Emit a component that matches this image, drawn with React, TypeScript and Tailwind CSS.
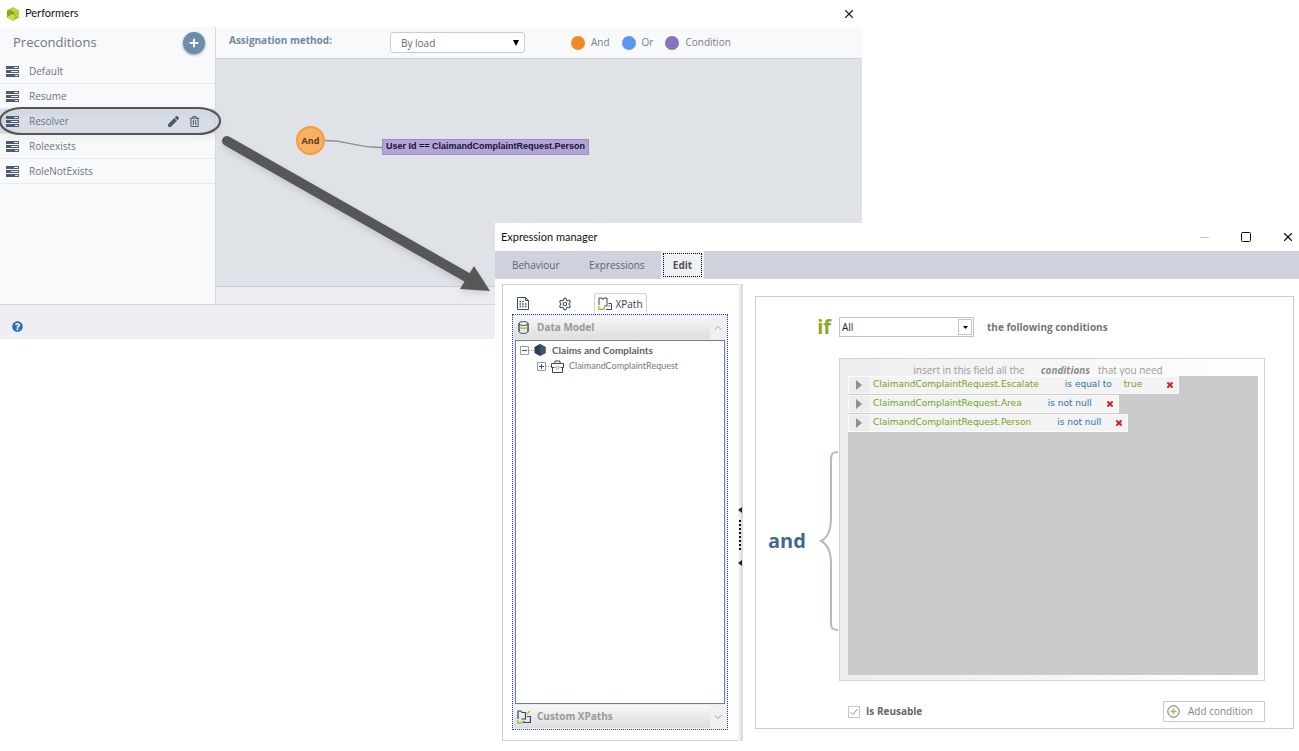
import React, { useState } from 'react';
import { X, Minus, Square, Plus, Settings, ChevronUp, ChevronDown } from 'lucide-react';
import { FaPen, FaRegTrashAlt, FaQuestionCircle } from 'react-icons/fa';

const preconditions = ['Default', 'Resume', 'Resolver', 'Roleexists', 'RoleNotExists'];

const conditions = [
  { path: 'ClaimandComplaintRequest.Escalate', operator: 'is equal to', value: 'true' },
  { path: 'ClaimandComplaintRequest.Area', operator: 'is not null' },
  { path: 'ClaimandComplaintRequest.Person', operator: 'is not null' },
];

function LogoIcon() {
  return (
    <svg className="w-[14px] h-[14px]" viewBox="0 0 14 14">
      <path d="M7 .3 13 3.5v7L7 13.7 1 10.5v-7z" fill="#9dbd2c" />
      <path d="M7 .3 13 3.5 8.500 6 4.500 3.500z" fill="#bfd63f" />
      <path d="M1 3.5 4.500 3.500 6 7 1 10.5z" fill="#87a823" />
      <path d="M8.500 6 13 3.5v7L9.500 9z" fill="#b4cf38" />
      <path d="M6 7 9.500 9 7 13.7 1 10.500z" fill="#c5dc45" />
      <path d="M4.500 3.500 8.500 6 6 7z" fill="#6f8f18" />
    </svg>
  );
}

function RowsIcon() {
  return (
    <svg className="w-[13px] h-[11px]" viewBox="0 0 13 11">
      <path d="M0 0h13v3H0zM0 4h13v3H0zM0 8h13v3H0z" fill="#4d5c74" />
      <path d="M8 1h4v1H8zM5 5h7v1H5zM9 9h3v1H9z" fill="#e8ecf2" />
    </svg>
  );
}

function SheetIcon() {
  return (
    <svg className="w-3 h-[13px]" viewBox="0 0 12 13" fill="none" stroke="#3f4f60">
      <path d="M.5 .5h8l3 3v9H.5z" />
      <path d="M8.5 .5v3h3" />
      <path d="M2.5 4.5h1.5M5.2 4.5h1.5M2.5 7h1.5M5.2 7h1.5M8 7h1.5M2.5 9.5h1.5M5.2 9.5h1.5M8 9.5h1.5" strokeWidth="1.5" />
    </svg>
  );
}

function XPathIcon() {
  return (
    <svg className="w-[14px] h-[14px] shrink-0" viewBox="0 0 14 14" fill="none" stroke="#34495e">
      <path d="M1 8V1h3l1 1.5 1-1.5h3v8H6" />
      <path d="M10.5 6.500h3v6M10.500 9h1.500M8 12.500h5.500" />
      <path d="M1 9v3.300h5V10" stroke="#a4c639" strokeWidth="1.5" />
    </svg>
  );
}

function CustomXPathIcon() {
  return (
    <svg className="w-[14px] h-[14px] shrink-0" viewBox="0 0 14 14" fill="none" stroke="#34495e">
      <path d="M1 9V1h3l1 1.5h3.500V9H4.5" strokeWidth="1.2" />
      <path d="M10 6.5h3.5v6H7V11" strokeWidth="1.2" />
      <path d="M.8 10v3h4v-2M10 4l3-3" stroke="#a4c639" strokeWidth="1.5" />
    </svg>
  );
}

function DatabaseIcon() {
  return (
    <svg className="w-[11px] h-[13px]" viewBox="0 0 11 13" fill="none" stroke="#3f4f60">
      <path d="M1 2.5v8c0 1 2 2 4.5 2s4.5-1 4.5-2v-8" />
      <path d="M1 2.5v8M10 2.5v8" />
      <ellipse cx="5.5" cy="2.5" rx="4.5" ry="2" />
      <path d="M1.5 6.5c1.500 1 6.500 1 8 0" stroke="#a4c639" strokeWidth="1.5" />
    </svg>
  );
}

function BriefcaseIcon() {
  return (
    <svg className="w-[13px] h-[13px]" viewBox="0 0 13 13" fill="none" stroke="#34495e">
      <path d="M4 3V1h5v2M.5 3.5h12v4H.5zM1.5 7.5v5h10v-5" />
      <path d="M3 7.5h7" stroke="#a4c639" />
      <circle cx="6.5" cy="7.8" r="1.5" fill="#fff" stroke="#a4c639" />
    </svg>
  );
}

function TreeToggle({ open }: { open: boolean }) {
  return (
    <svg className="w-[9px] h-[9px]" viewBox="0 0 9 9" fill="#fff" stroke="#9a9a9a">
      <path d="M.5 .5h8v8h-8z" />
      <path d={open ? 'M2 4.5h5' : 'M2 4.5h5M4.5 2v5'} stroke="#3c4f86" />
    </svg>
  );
}

function LegendItem({ color, label }: { color: string; label: string }) {
  return (
    <div className="flex items-center gap-[6px]">
      <span className={`w-[14px] h-[14px] rounded-full ${color}`} />
      <span>{label}</span>
    </div>
  );
}

function PerformersWindow() {
  const [selected, setSelected] = useState('Resolver');

  return (
    <section className="absolute top-0 left-0 right-[437px] flex flex-col bg-white">
      <header className="h-[27px] flex items-center pl-[6px] pr-[6px]">
        <LogoIcon />
        <h1 className="ml-[5px] font-['Lato'] text-[11px] text-[#111]">Performers</h1>
        <button aria-label="Close" className="ml-auto">
          <X className="w-[14px] h-[14px] text-[#222]" strokeWidth={2} />
        </button>
      </header>

      <div className="flex h-[277px]">
        <aside className="w-[216px] shrink-0 bg-[#f8f9fb] border-r border-[#d6d9df]">
          <div className="h-8 flex items-center justify-between pl-[13px] pr-[10px]">
            <h2 className="text-[13px] text-[#6a7688]">Preconditions</h2>
            <button aria-label="Add precondition" className="w-[22px] h-[22px] rounded-full bg-[#6e8cab] shadow-sm shadow-gray-400 flex items-center justify-center">
              <Plus className="w-3 h-3 text-white" strokeWidth={4} />
            </button>
          </div>
          <ul>
            {preconditions.map(name => (
              <li
                key={name}
                className={`h-[25px] flex items-center pl-[6px] pr-[15px] border-b border-[#e9ebef] ${name === selected ? 'bg-[#d9dee6]' : ''}`}
              >
                <button onClick={() => setSelected(name)} className="flex items-center gap-[10px] text-[10px] text-[#6a7484]">
                  <RowsIcon />
                  <span>{name}</span>
                </button>
                {name === selected && (
                  <div className="ml-auto flex items-center gap-[10px] text-[#4d5a6e]">
                    <button aria-label="Edit"><FaPen className="w-[11px] h-[11px]" /></button>
                    <button aria-label="Delete"><FaRegTrashAlt className="w-[11px] h-[11px]" /></button>
                  </div>
                )}
              </li>
            ))}
          </ul>
        </aside>

        <div className="flex-1 flex flex-col min-w-0">
          <div className="h-8 flex items-center pl-[13px] bg-[#f8f9fb] border-b border-[#cfd3d8] text-[10px] text-[#77818f]">
            <label htmlFor="method" className="w-[161px] font-bold text-[#70899d] pb-1">Assignation method:</label>
            <div className="grid w-[135px] items-center">
              <select id="method" className="col-start-1 row-start-1 appearance-none w-full h-[21px] pl-[10px] pt-[2px] bg-white border border-[#c9ccd0] rounded-[3px] text-[10px] text-[#5f6870]">
                <option>By load</option>
              </select>
              <svg className="col-start-1 row-start-1 justify-self-end mr-[6px] w-[6px] h-[6px] pointer-events-none" viewBox="0 0 6 6">
                <path d="M0 0h6L3 6z" fill="#000" />
              </svg>
            </div>
            <div className="ml-[46px] flex gap-3">
              <LegendItem color="bg-[#f08b24]" label="And" />
              <LegendItem color="bg-[#5899ee]" label="Or" />
              <LegendItem color="bg-[#8772bb]" label="Condition" />
            </div>
          </div>

          {/* Diagram canvas */}
          <div className="relative flex-1 bg-[#dfe3e8]">
            <svg className="absolute left-[108px] top-[80px] w-[60px] h-[12px]" viewBox="0 0 60 12" fill="none">
              <path d="M0 1.5c28 0 28 7 58 7" stroke="#8b9096" strokeWidth="1.3" />
            </svg>
            <div className="absolute left-[80px] top-[67px] w-[29px] h-[29px] rounded-full bg-[#f8b066] border-2 border-[#f49d3f] flex items-center justify-center text-[9px] font-bold text-[#5a3a14]">
              And
            </div>
            <div className="absolute left-[166px] top-[80px] h-4 px-[3px] flex items-center bg-[#b3a4d8] border border-[#9c8bc9] font-['Liberation_Sans'] text-[9px] font-bold text-[#16122c] whitespace-nowrap">
              User Id == ClaimandComplaintRequest.Person
            </div>
          </div>
          <div className="h-[18px] bg-[#ebedf1] border-t border-[#c9cddb]" />
        </div>
      </div>

      <footer className="h-[35px] flex items-center pt-2 pl-3 bg-[#eeeff3] border-t border-[#d3d6db]">
        <button aria-label="Help"><FaQuestionCircle className="w-[11px] h-[11px] text-[#2f6fae]" /></button>
      </footer>
    </section>
  );
}

function Annotation() {
  return (
    <svg className="absolute top-0 left-0 w-[500px] h-[310px] pointer-events-none drop-shadow-md" viewBox="0 0 500 310">
      <rect x="0" y="108" width="220" height="26" rx="22" ry="13" fill="none" stroke="#555" strokeWidth="2.2" />
      <path d="M227 141 470 279" stroke="#575757" strokeWidth="10" strokeLinecap="round" />
      <path d="M474 266 490 291 460 289z" fill="#575757" />
    </svg>
  );
}

function DataPanel() {
  return (
    <div className="w-[241px] shrink-0 flex">
      <div className="flex-1 flex flex-col border border-r-0 border-[#cfcfcf] pt-2 pl-[9px] pr-[10px] pb-[10px]">
        <div className="flex h-[21px] items-center pl-[5px]">
          <button aria-label="Forms" className="w-[41px] flex"><SheetIcon /></button>
          <button aria-label="Settings" className="w-[36px] flex">
            <Settings className="w-[14px] h-[14px] text-[#4a5866]" strokeWidth={2} />
          </button>
          <button className="h-[21px] w-[53px] flex items-center justify-center gap-[3px] border border-b-0 border-[#d3d3d3] rounded-t-[3px] text-[10px] text-[#3a3a3a]">
            <XPathIcon />
            XPath
          </button>
        </div>
        <div className="flex-1 flex flex-col border border-dotted border-[#2e3f9c] p-px bg-[#e9edf5]">
          <button className="h-[23px] flex items-center bg-gradient-to-b from-[#f7f7f7] to-[#dedede] text-[10px] font-bold text-[#999]">
            <span className="w-[23px] pl-1"><DatabaseIcon /></span>
            Data Model
            <span className="ml-auto h-full w-4 flex items-center justify-center bg-[#f0f0f0]">
              <ChevronUp className="w-3 h-3 text-[#aaa]" />
            </span>
          </button>
          <div className="flex-1 m-px border border-[#747b8c] bg-white pl-1 pt-[1px]">
            <div className="h-4 flex items-center font-['Lato'] text-[10px] font-bold text-[#5f5f5f]">
              <TreeToggle open />
              <span className="w-[5px] border-t border-dotted border-gray-400" />
              <svg className="w-3 h-3 mr-[6px]" viewBox="0 0 12 12">
                <path d="M6 0 11.5 3v6L6 12 .5 9V3z" fill="#2c3e50" />
                <path d="M6 0 11.5 3v6L6 12z" fill="#3f566b" />
              </svg>
              Claims and Complaints
            </div>
            <div className="h-4 flex items-center pl-[17px] font-['Lato'] text-[9px] text-[#777]">
              <TreeToggle open={false} />
              <span className="w-[5px] border-t border-dotted border-gray-400" />
              <BriefcaseIcon />
              <span className="ml-[5px]">ClaimandComplaintRequest</span>
            </div>
          </div>
          <button className="h-[23px] flex items-center bg-gradient-to-b from-[#f7f7f7] to-[#dedede] text-[10px] font-bold text-[#999]">
            <span className="w-[23px] pl-[3px]"><CustomXPathIcon /></span>
            Custom XPaths
            <span className="ml-auto h-full w-4 flex items-center justify-center bg-[#f0f0f0]">
              <ChevronDown className="w-3 h-3 text-[#999]" />
            </span>
          </button>
        </div>
      </div>
      <div className="w-[5px] flex items-center bg-gradient-to-r from-[#f8f8f8] to-[#d4d4d4]">
        <svg className="w-[5px] h-[60px] mt-12" viewBox="0 0 5 60">
          <path d="M4 0v6L0 3zM4 53v6L0 56z" fill="#222" />
          <path d="M2 13v32" stroke="#111" strokeWidth="2" strokeDasharray="2 2" />
        </svg>
      </div>
    </div>
  );
}

function ConditionsPanel() {
  const [reusable, setReusable] = useState(true);

  return (
    <div className="flex-1 flex flex-col ml-3 mt-3 mb-3 mr-[5px] border border-[#ccc] pt-5 pr-7 pb-[6px] pl-3">
      <div className="flex items-center h-5 gap-2">
        <label htmlFor="match" className="w-[63px] text-right text-[20px] leading-5 font-bold text-[#8aab1e]">if</label>
        <div className="grid w-[135px] items-center">
          <select id="match" className="col-start-1 row-start-1 appearance-none h-5 w-full pl-[2px] border border-[#c2c2c2] bg-white text-[10px] text-[#222]">
            <option>All</option>
          </select>
          <span className="col-start-1 row-start-1 justify-self-end mr-[2px] w-[14px] h-4 flex items-center justify-center border border-[#c4c4c4] pointer-events-none">
            <svg className="w-[5px] h-[3px]" viewBox="0 0 5 3"><path d="M0 0h5L2.5 3z" fill="#000" /></svg>
          </span>
        </div>
        <span className="ml-[5px] text-[10px] font-bold text-[#757575]">the following conditions</span>
      </div>

      <div className="flex-1 flex mt-[21px]">
        <div className="w-[71px] shrink-0 flex items-center justify-between pt-[42px]">
          <span className="text-[20px] font-bold text-[#3f6a8d]">and</span>
          <svg className="w-5 h-[180px]" viewBox="0 0 20 180" fill="none">
            <path d="M19 1c-6 0-7 2-7 8v58c0 14-4 20-10 23 6 3 10 9 10 23v58c0 6 1 8 7 8" stroke="#afbcc7" strokeWidth="2" />
          </svg>
        </div>
        <div className="flex-1 flex flex-col border border-[#d2d2d2] bg-gradient-to-r from-[#eee] to-white pl-2 pr-[6px] pb-[5px]">
          <p className="h-[17px] pt-[6px] pr-[30px] flex items-center justify-center text-[10px] text-[#999] whitespace-nowrap">
            insert in this field all the
            <em className="mx-4 font-bold text-[#8c8c8c]">conditions</em>
            <span className="-ml-2">that you need</span>
          </p>
          <ul className="flex-1 flex flex-col items-start gap-px bg-[#cbcbcb]">
            {conditions.map(c => (
              <li key={c.path} className="h-[18px] flex items-center bg-[#f3f3f3] border border-[#fafafa] pr-1 font-['DejaVu_Sans'] text-[9px] text-[#74a11f]">
                <button aria-label="Expand" className="w-5 h-full flex items-center justify-center bg-[#ececec] mr-1">
                  <svg className="w-[6px] h-[10px]" viewBox="0 0 6 10"><path d="M0 0 6 5 0 10z" fill="#8f8f8f" /></svg>
                </button>
                {c.path}
                <span className="ml-[26px] text-[#2f71a3]">{c.operator}</span>
                {c.value && <span className="ml-3">{c.value}</span>}
                <button aria-label="Remove" className={c.value ? 'ml-6' : 'ml-[14px]'}>
                  <X className="w-2 h-2 text-[#d2232a]" strokeWidth={6} />
                </button>
              </li>
            ))}
          </ul>
        </div>
      </div>

      <div className="flex items-center justify-between mt-5 pl-20">
        <label className="flex items-center gap-[6px] text-[10px] font-bold text-[#666]">
          <span className="grid items-center justify-items-center">
            <input
              type="checkbox"
              checked={reusable}
              onChange={e => setReusable(e.target.checked)}
              className="col-start-1 row-start-1 appearance-none w-3 h-3 border border-[#c4c4c4] bg-white"
            />
            {reusable && (
              <svg className="col-start-1 row-start-1 w-2 h-2 pointer-events-none" viewBox="0 0 8 8" fill="none">
                <path d="M.5 4 3 6.5 7.5 1" stroke="#999" />
              </svg>
            )}
          </span>
          Is Reusable
        </label>
        <button className="h-[21px] w-[102px] flex items-center gap-2 pl-[3px] border border-[#cbcbcb] text-[10px] text-[#858585] whitespace-nowrap">
          <svg className="w-[13px] h-[13px]" viewBox="0 0 13 13" fill="none">
            <circle cx="6.5" cy="6.5" r="5.700" stroke="#5d6b78" />
            <path d="M6.5 3.5v6M3.5 6.5h6" stroke="#a4c639" strokeWidth="1.5" />
          </svg>
          Add condition
        </button>
      </div>
    </div>
  );
}

function ExpressionWindow() {
  return (
    <section className="absolute top-[223px] left-[495px] right-0 bottom-[10px] flex flex-col bg-white">
      <header className="h-7 shrink-0 flex items-center pl-[6px] pr-1">
        <h1 className="font-['Lato'] text-[11px] text-[#111]">Expression manager</h1>
        <div className="ml-auto flex items-center gap-[29px] text-[#111]">
          <button aria-label="Minimize"><Minus className="w-[13px] h-[13px] text-[#bbb]" strokeWidth={2} /></button>
          <button aria-label="Maximize"><Square className="w-3 h-3" strokeWidth={2} /></button>
          <button aria-label="Close"><X className="w-[14px] h-[14px]" strokeWidth={2} /></button>
        </div>
      </header>
      <nav className="h-7 shrink-0 flex items-center bg-[#cfd2dd] text-[10px] text-[#5b6470]">
        <button className="w-[77px] pl-[17px] text-left">Behaviour</button>
        <button className="w-[89px] pl-[17px] text-left">Expressions</button>
        <div className="h-full w-[43px] p-[2px] bg-[#eff1f5]">
          <button className="w-full h-full border border-dotted border-black font-bold text-[#4a525c]">Edit</button>
        </div>
      </nav>
      <div className="flex-1 flex pl-[7px] pt-[5px]">
        <DataPanel />
        <ConditionsPanel />
      </div>
    </section>
  );
}

export default function App() {
  return (
    <main className="relative min-h-screen overflow-hidden bg-white font-['Open_Sans',sans-serif]">
      <PerformersWindow />
      <Annotation />
      <ExpressionWindow />
    </main>
  );
}
